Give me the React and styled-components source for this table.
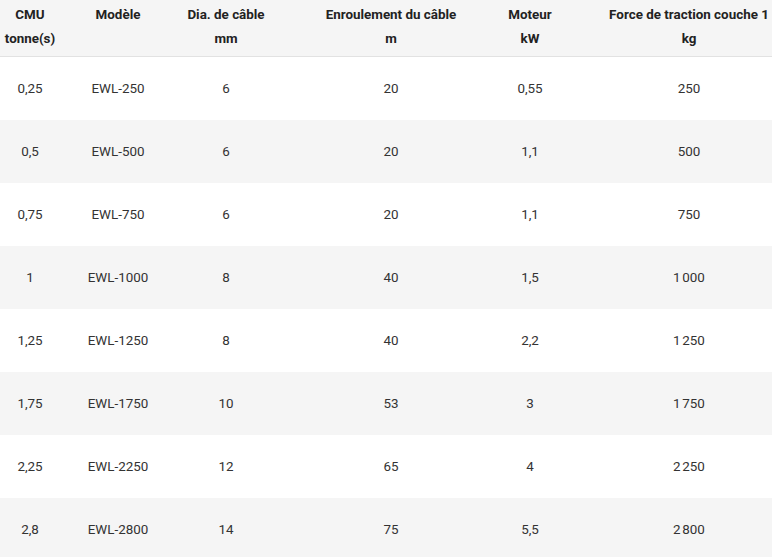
import React from "react";
import styled, { createGlobalStyle } from "styled-components";

const Global = createGlobalStyle`
  html, body { margin: 0; padding: 0; background: #fff; overflow: hidden; }
  body { font-family: Roboto, "Liberation Sans", Arial, sans-serif; }
`;

const COLS = "60px 116px 100px 230px 48px 270px";

const Frame = styled.div`
  width: 772px;
  overflow: hidden;
`;

const Table = styled.div`
  display: grid;
  grid-template-columns: ${COLS};
  width: 824px;
  font-size: 13.4px;
  color: #333;
`;

const HeadCell = styled.div`
  box-sizing: border-box;
  background: #f5f5f5;
  border-bottom: 1px solid #e2e2e2;
  height: 57px;
  padding-top: 3px;
  font-weight: 700;
  color: #222;
  line-height: 24px;
  text-align: center;
  white-space: nowrap;
`;

const Cell = styled.div`
  height: 63px;
  display: flex;
  align-items: center;
  justify-content: center;
  background: ${(p) => (p.$alt ? "#f5f5f5" : "#fff")};
  white-space: nowrap;
`;

const headers = [
  ["CMU", "tonne(s)"],
  ["Modèle"],
  ["Dia. de câble", "mm"],
  ["Enroulement du câble", "m"],
  ["Moteur", "kW"],
  ["Force de traction couche 1", "kg"],
];

const NB = "\u202F";
const rows = [
  ["0,25", "EWL-250", "6", "20", "0,55", "250"],
  ["0,5", "EWL-500", "6", "20", "1,1", "500"],
  ["0,75", "EWL-750", "6", "20", "1,1", "750"],
  ["1", "EWL-1000", "8", "40", "1,5", `1${NB}000`],
  ["1,25", "EWL-1250", "8", "40", "2,2", `1${NB}250`],
  ["1,75", "EWL-1750", "10", "53", "3", `1${NB}750`],
  ["2,25", "EWL-2250", "12", "65", "4", `2${NB}250`],
  ["2,8", "EWL-2800", "14", "75", "5,5", `2${NB}800`],
];

export default function App() {
  return (
    <>
      <Global />
      <Frame>
        <Table>
          {headers.map((h, i) => (
            <HeadCell key={"h" + i}>
              {h.map((l, j) => (
                <div key={j}>{l}</div>
              ))}
            </HeadCell>
          ))}
          {rows.map((r, i) =>
            r.map((c, j) => (
              <Cell key={i + "-" + j} $alt={i % 2 === 1}>
                {c}
              </Cell>
            ))
          )}
        </Table>
      </Frame>
    </>
  );
}
